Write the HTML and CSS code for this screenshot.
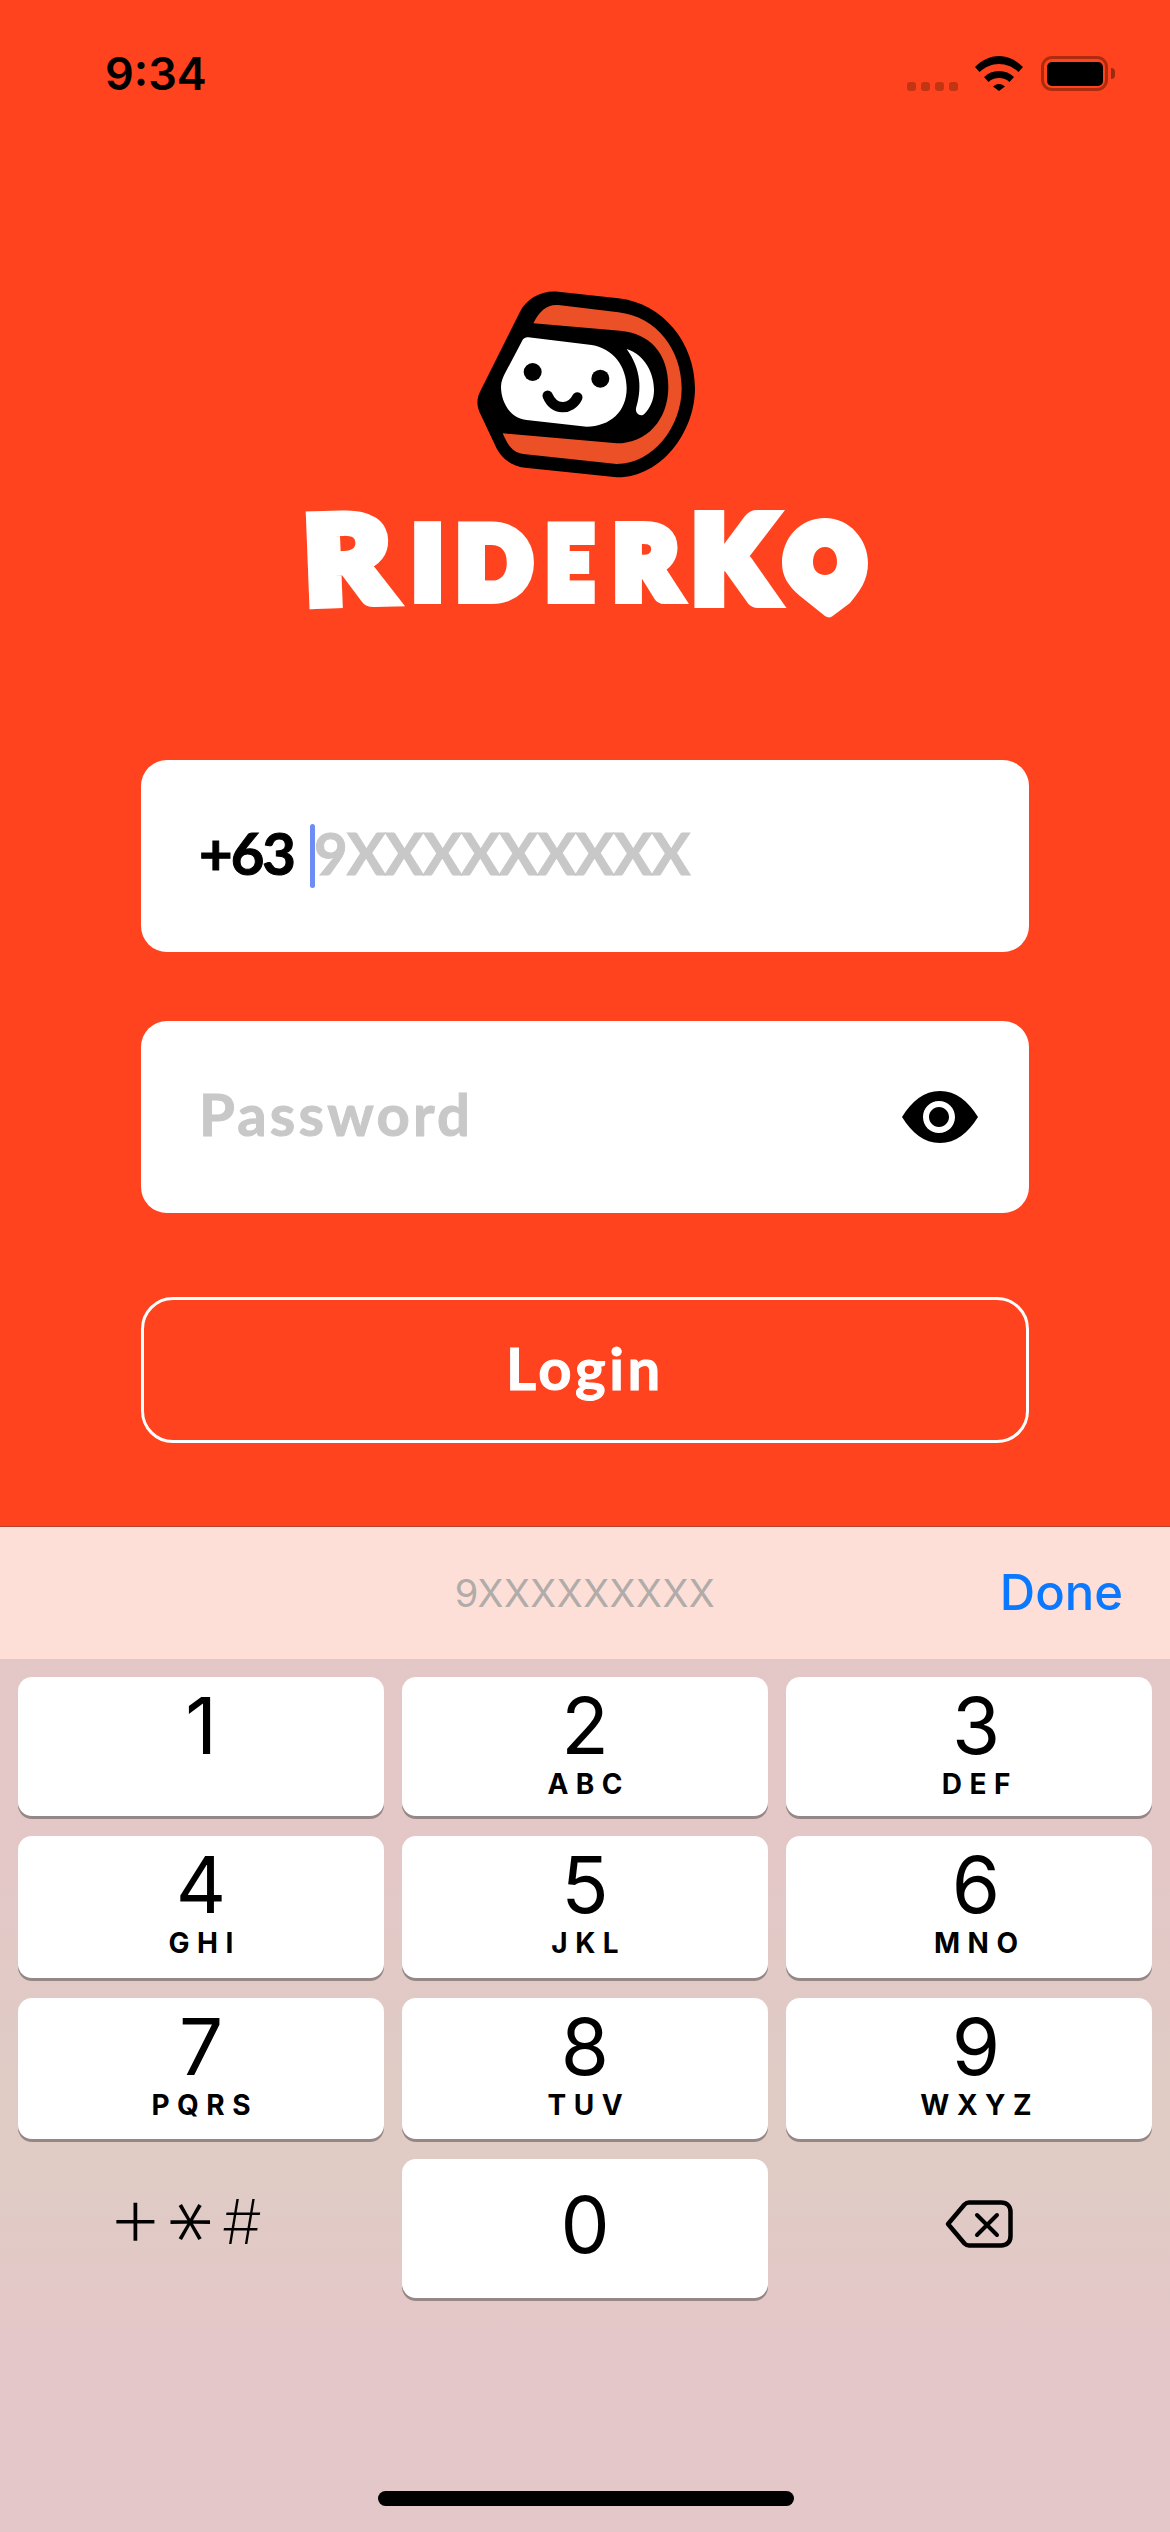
FILE: index.html
```html
<!DOCTYPE html>
<html lang="en">
<head>
<meta charset="utf-8">
<title>RiderKo</title>
<link rel="stylesheet" href="styles.css">
</head>
<body>
<main class="phone">
  <header class="status">
    <span class="time">9:34</span>
    <div class="status-icons">
      <div class="signal"><i></i><i></i><i></i><i></i></div>
      <svg class="wifi" viewBox="0 0 48 35"><path d="M0 11C7 4 15 0 24 0S41 4 48 11L43.500 16C38 11 31.500 8 24 8S10 11 4.500 16Z"/><path d="M9 21C13 17 18 15 24 15S35 17 39 21L34.500 26C32 23.500 28 22 24 22S16 23.500 13.500 26Z"/><path d="M18 30.500C20 28.800 22 28 24 28S28 28.800 30 30.500L24 35Z"/></svg>
      <div class="battery"><div class="battery-fill"></div></div>
      <div class="battery-cap"></div>
    </div>
  </header>

  <section class="brand">
    <svg class="helmet" viewBox="0 0 750 630">
      <path fill="#000" d="M295 35 L475 55 C610 70 705 190 705 325 C705 460 600 595 470 592 L195 563 C150 558 120 530 105 495 L58 395 C50 375 50 355 60 335 L180 95 C200 55 245 30 295 35Z"/>
      <path fill="#EB5026" d="M220 130 C238 92 262 72 295 75 L475 97 C590 110 665 210 665 325 C665 440 580 552 470 552 L190 522 C160 518 145 500 128 460 L470 490 C560 490 625 420 625 320 C625 220 570 160 480 152Z"/>
      <path fill="#fff" d="M205 172 L395 195 C460 205 500 260 500 325 C500 395 450 440 380 440 L200 420 C150 415 123 365 123 320 C123 305 130 290 135 280 L185 185 C190 175 195 172 205 172Z"/>
      <circle cx="218" cy="276" r="27" fill="#000"/>
      <circle cx="421" cy="296" r="27" fill="#000"/>
      <path fill="none" stroke="#000" stroke-width="31" stroke-linecap="round" d="M263 347 C282 392 332 392 352 352"/>
      <path fill="#fff" d="M500 207 C555 225 582 280 582 330 C582 360 570 385 553 402 C543 412 525 402 528 385 C545 330 545 270 500 207Z"/>
    </svg>
    <div class="wordmark">
      <span class="big letter-r1">R</span><span class="small letter-i">I</span><span class="small letter-d">D</span><span class="small letter-e">E</span><span class="small letter-r2">R</span><span class="big letter-k">K</span><svg class="pin" viewBox="0 0 86 100"><path fill="#fff" fill-rule="evenodd" d="M43 0C68 0 86 22 86 45C86 62 78 73 68 85L52 97C49 100 46 100 43 98L18 78C6 68 0 58 0 45C0 20 18 0 43 0ZM43 29C35 29 31 36 31 44C31 52 36 57 43 57C50 57 55 52 55 44C55 36 51 29 43 29Z"/></svg>
    </div>
  </section>

  <form class="form">
    <div class="field">
      <span class="prefix">+63</span>
      <span class="caret"></span>
      <span class="placeholder phone-ph">9XXXXXXXXX</span>
    </div>
    <div class="field field-password">
      <span class="placeholder password-ph">Password</span>
      <svg class="eye" viewBox="0 0 76 52"><path fill-rule="evenodd" d="M0 26C10 10 22 0 38 0C54 0 66 10 76 26C66 42 54 52 38 52C22 52 10 42 0 26ZM37 10C28 10 21 17 21 26C21 35 28 42 37 42C46 42 53 35 53 26C53 17 46 10 37 10ZM37 16C42.500 16 47 20.500 47 26C47 31.500 42.500 36 37 36C31.500 36 27 31.500 27 26C27 20.500 31.500 16 37 16Z"/></svg>
    </div>
    <div class="login"><span class="login-label">Login</span></div>
  </form>

  <section class="keyboard">
    <div class="accessory">
      <span class="acc-ph">9XXXXXXXXX</span>
      <span class="done">Done</span>
    </div>
    <div class="keys">
      <div class="key"><span class="digit">1</span></div>
      <div class="key"><span class="digit">2</span><span class="letters">ABC</span></div>
      <div class="key key-right"><span class="digit">3</span><span class="letters">DEF</span></div>
      <div class="key"><span class="digit">4</span><span class="letters">GHI</span></div>
      <div class="key"><span class="digit">5</span><span class="letters">JKL</span></div>
      <div class="key key-right"><span class="digit">6</span><span class="letters">MNO</span></div>
      <div class="key"><span class="digit">7</span><span class="letters">PQRS</span></div>
      <div class="key"><span class="digit">8</span><span class="letters">TUV</span></div>
      <div class="key key-right"><span class="digit">9</span><span class="letters">WXYZ</span></div>
      <div class="key-flat key-symbols"><span class="sym sym-plus">+</span><span class="sym sym-star">*</span><span class="sym sym-hash">#</span></div>
      <div class="key key-zero"><span class="digit">0</span></div>
      <div class="key-flat key-back">
        <svg class="backspace" viewBox="0 0 68 48"><path fill="none" stroke="#000" stroke-width="4.500" stroke-linejoin="round" d="M24 2.500H56C62 2.500 65.500 6 65.500 12V36C65.500 42 62 45.500 56 45.500H24C22 45.500 21 45 19.500 43.500L3 24L19.500 4.500C21 3 22 2.500 24 2.500Z"/><path fill="none" stroke="#000" stroke-width="4" stroke-linecap="round" d="M32 15L52 35M52 15L32 35"/></svg>
      </div>
    </div>
    <div class="home-bar"></div>
  </section>
</main>
</body>
</html>
```

FILE: styles.css
```css
* { box-sizing: border-box; }
html, body { margin: 0; padding: 0; }
body { width: 1170px; height: 2532px; overflow: hidden; }

.phone {
  width: 1170px;
  height: 2532px;
  background: #FF431E;
  display: flex;
  flex-direction: column;
  font-family: "Inter", "Liberation Sans", sans-serif;
  color: #000;
}

.status {
  height: 130px;
  padding: 49px 55px 0 105px;
  display: flex;
  justify-content: space-between;
  align-items: flex-start;
}
.time { font-size: 45px; font-weight: 600; line-height: 50px; }
.status-icons { display: flex; align-items: flex-start; padding-top: 7px; }
.signal { display: flex; gap: 5px; margin-top: 26px; margin-right: 17px; }
.signal i { width: 9px; height: 9px; border-radius: 3px; background: #C23513; }
.wifi { width: 48px; height: 35px; margin-right: 18px; }
.battery {
  width: 67px; height: 35px;
  border: 3.500px solid #AE2C0E;
  border-radius: 11px;
  padding: 2.500px;
}
.battery-fill { width: 100%; height: 100%; background: #000; border-radius: 5px; }
.battery-cap { width: 4px; height: 11px; margin: 12px 0 0 3px; background: #9A2A10; border-radius: 0 5px 5px 0; }

.brand { height: 630px; display: flex; flex-direction: column; align-items: flex-start; }
.helmet { width: 250px; height: 210px; margin: 150px 0 0 460px; }
.wordmark {
  margin: 18px 0 0 303px;
  height: 112px;
  width: 570px;
  display: flex;
  align-items: flex-start;
  font-family: "Lato", "Liberation Sans", sans-serif;
  font-weight: 900;
  color: #fff;
  -webkit-text-stroke: 12px #fff;
  line-height: 1;
}
.big { font-size: 118px; line-height: 97px; text-align: center; flex: none; }
.small { font-size: 98px; line-height: 85px; margin-top: 10px; text-align: center; flex: none; }
.letter-r1 { width: 102px; transform: translateX(-7px) scaleX(1.12) rotate(-2deg); }
.letter-i { width: 45px; }
.letter-d { width: 88px; }
.letter-e { width: 63px; transform: scaleX(0.82); }
.letter-r2 { width: 89px; }
.letter-k { width: 85px; }
.pin { width: 86px; height: 100px; margin: 10px 0 0 7px; flex: none; }

.form {
  display: flex;
  flex-direction: column;
  padding: 0 141px;
  font-family: "Lato", "Liberation Sans", sans-serif;
}
.field {
  height: 192px;
  background: #fff;
  border-radius: 26px;
  padding: 0 51px 8px 58px;
  display: flex;
  align-items: center;
  font-size: 58px;
  font-weight: 700;
  -webkit-text-stroke: 1px currentColor;
  margin-bottom: 69px;
}
.prefix { color: #000; margin-right: 16px; letter-spacing: -2px; }
.caret { width: 5px; height: 64px; background: #6D8DF5; border-radius: 3px; margin-top: 8px; }
.placeholder { color: #C8C8C8; }
.phone-ph { margin-left: -1px; letter-spacing: -0.800px; }
.password-ph { letter-spacing: 3.200px; }
.field-password { justify-content: space-between; margin-bottom: 84px; }
.eye { width: 76px; height: 52px; margin-top: 8px; }
.login {
  height: 146px;
  border: 3px solid #fff;
  border-radius: 32px;
  color: #fff;
  font-size: 58px;
  font-weight: 700;
  -webkit-text-stroke: 1px currentColor;
  display: flex;
  align-items: center;
  justify-content: center;
  padding-bottom: 6px;
}
.login-label { letter-spacing: 3.600px; }

.keyboard {
  margin-top: 83px;
  flex: 1;
  display: flex;
  flex-direction: column;
  position: relative;
  background: linear-gradient(180deg, #E4C7C8 0%, #E3C8C7 35%, #DFCCC4 62%, #E4C7C8 80%, #E4C7C8 100%);
  border-top: 1px solid #B5412A;
}
.accessory {
  height: 132px;
  background: #FDDFD8;
  display: flex;
  align-items: center;
  justify-content: center;
  position: relative;
}
.acc-ph { font-size: 38px; color: #B1ACA9; letter-spacing: 0.500px; }
.done { position: absolute; right: 47px; top: 41px; font-size: 49px; font-weight: 550; line-height: 50px; color: #0A78FF; }

.keys {
  padding: 18px 18px 0;
  display: grid;
  grid-template-columns: repeat(3, 366px);
  grid-template-rows: 139px 142px 141px 139px;
  column-gap: 18px;
  row-gap: 20px;
}
.key {
  background: #fff;
  border-radius: 14px;
  box-shadow: 0 3px 0 #968787;
  display: flex;
  flex-direction: column;
  align-items: center;
  padding-top: 18px;
}
.key-right { padding-left: 14px; }
.digit { font-size: 78px; font-weight: 400; line-height: 62px; }
.letters { font-size: 28px; font-weight: 700; letter-spacing: 7.500px; margin-right: -7.500px; line-height: 30px; margin-top: 12px; }
.key-zero { padding-top: 35px; }
.key-flat { display: flex; align-items: center; justify-content: center; }
.key-symbols { padding: 0 26px 14px 0; }
.key-back { padding: 0 0 10px 20px; }
.sym { width: 54px; text-align: center; line-height: 60px; }
.sym-plus { font-size: 88px; font-weight: 200; transform: translateY(-7px); }
.sym-star { font-size: 96px; font-weight: 200; transform: translateX(-13px) rotate(90deg); }
.sym-hash { font-size: 62px; font-weight: 200; }
.backspace { width: 68px; height: 48px; }
.home-bar {
  position: absolute;
  left: 378px;
  bottom: 26px;
  width: 416px;
  height: 15px;
  border-radius: 8px;
  background: #000;
}
```
